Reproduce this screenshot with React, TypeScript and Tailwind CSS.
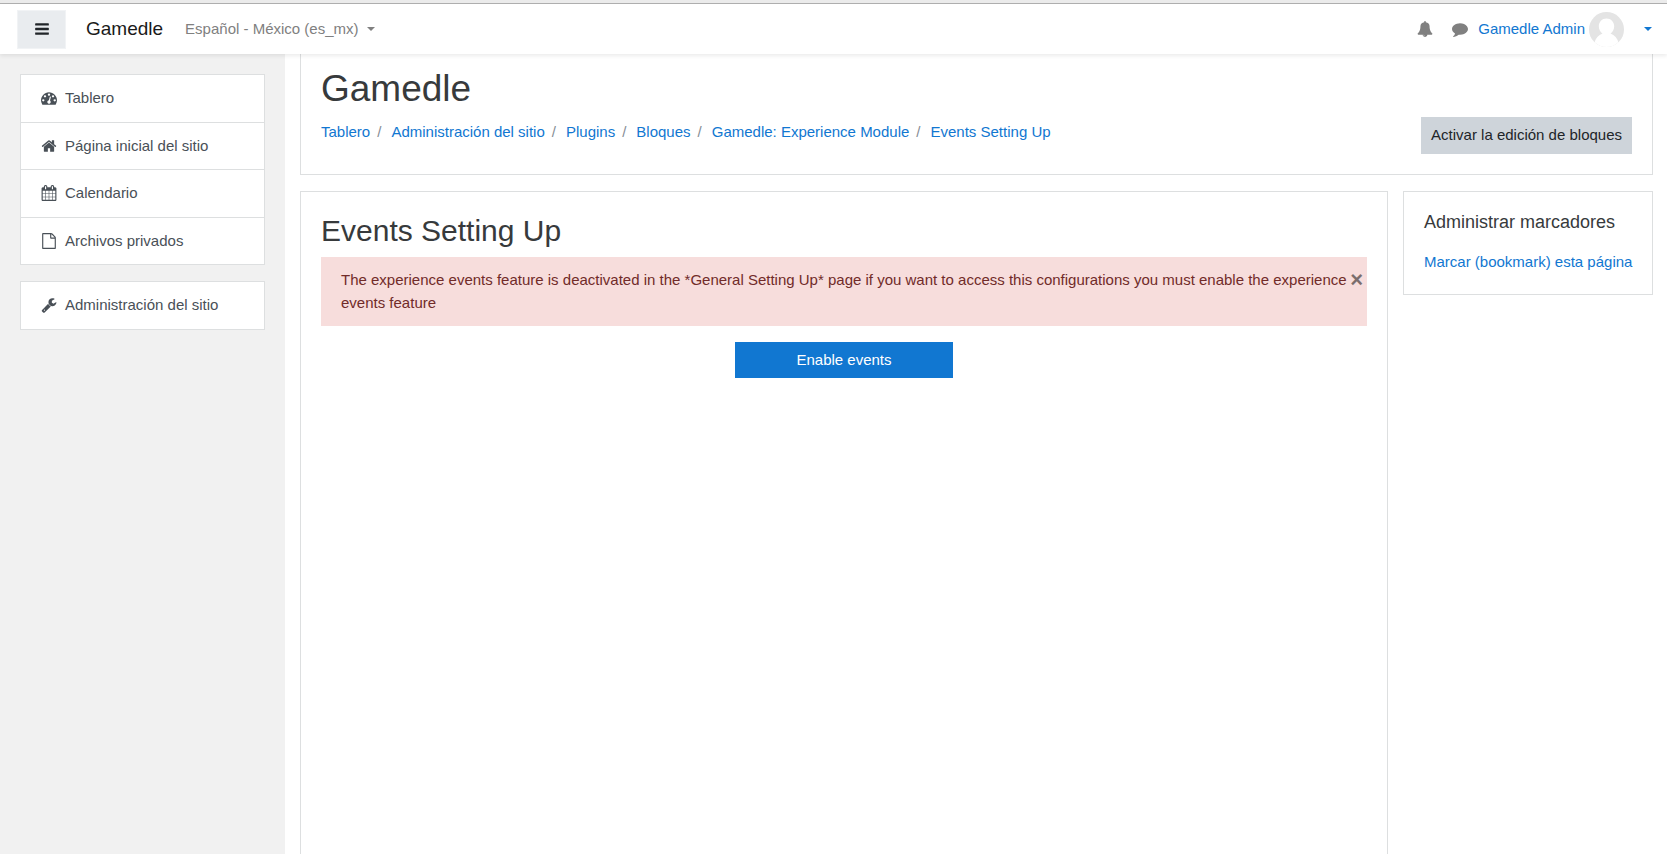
import React, { type ReactNode } from "react";

const icons = {
  bars: "M1664 1344v128q0 26-19 45t-45 19h-1408q-26 0-45-19t-19-45v-128q0-26 19-45t45-19h1408q26 0 45 19t19 45zm0-512v128q0 26-19 45t-45 19h-1408q-26 0-45-19t-19-45v-128q0-26 19-45t45-19h1408q26 0 45 19t19 45zm0-512v128q0 26-19 45t-45 19h-1408q-26 0-45-19t-19-45v-128q0-26 19-45t45-19h1408q26 0 45 19t19 45z",
  dashboard:
    "M384 1152q0-53-37.5-90.5t-90.5-37.5-90.5 37.5-37.5 90.5 37.5 90.5 90.5 37.5 90.5-37.5 37.5-90.5zm192-448q0-53-37.5-90.5t-90.5-37.5-90.5 37.5-37.5 90.5 37.5 90.5 90.5 37.5 90.5-37.5 37.5-90.5zm428 481l101-382q6-26-7.5-48.5t-38.5-29.5-48 6.5-30 39.5l-101 382q-60 5-107 43.5t-63 98.5q-20 77 20 146t117 89 146-20 89-117q16-60-6-117t-72-91zm660-33q0-53-37.5-90.5t-90.5-37.5-90.5 37.5-37.5 90.5 37.5 90.5 90.5 37.5 90.5-37.5 37.5-90.5zm-640-640q0-53-37.5-90.5t-90.5-37.5-90.5 37.5-37.5 90.5 37.5 90.5 90.5 37.5 90.5-37.5 37.5-90.5zm448 192q0-53-37.5-90.5t-90.5-37.5-90.5 37.5-37.5 90.5 37.5 90.5 90.5 37.5 90.5-37.5 37.5-90.5zm320 448q0 261-141 483-19 29-54 29h-1402q-35 0-54-29-141-221-141-483 0-182 71-348t191-286 286-191 348-71 348 71 286 191 191 286 71 348z",
  home: "M1472 992v480q0 26-19 45t-45 19h-384v-384h-256v384h-384q-26 0-45-19t-19-45v-480q0-1 .5-3t.5-3l575-474 575 474q1 2 1 6zm223-69l-62 74q-8 9-21 11h-3q-13 0-21-7l-692-577-692 577q-12 8-24 7-13-2-21-11l-62-74q-8-10-7-23.5t11-21.5l719-599q32-26 76-26t76 26l244 204v-195q0-14 9-23t23-9h192q14 0 23 9t9 23v408l219 182q10 8 11 21.5t-7 23.5z",
  calendar:
    "M192 1664h288v-288h-288v288zm352 0h320v-288h-320v288zm-352-352h288v-320h-288v320zm352 0h320v-320h-320v320zm-352-384h288v-288h-288v288zm736 736h320v-288h-320v288zm-384-736h320v-288h-320v288zm768 736h288v-288h-288v288zm-384-352h320v-320h-320v320zm-352-864v-288q0-13-9.5-22.5t-22.5-9.5h-64q-13 0-22.5 9.5t-9.5 22.5v288q0 13 9.5 22.5t22.5 9.5h64q13 0 22.5-9.5t9.5-22.5zm736 864h288v-320h-288v320zm-384-384h320v-288h-320v288zm384 0h288v-288h-288v288zm32-480v-288q0-13-9.5-22.5t-22.5-9.5h-64q-13 0-22.5 9.5t-9.5 22.5v288q0 13 9.5 22.5t22.5 9.5h64q13 0 22.5-9.5t9.5-22.5zm384-64v1280q0 52-38 90t-90 38h-1408q-52 0-90-38t-38-90v-1280q0-52 38-90t90-38h128v-96q0-66 47-113t113-47h64q66 0 113 47t47 113v96h384v-96q0-66 47-113t113-47h64q66 0 113 47t47 113v96h128q52 0 90 38t38 90z",
  file: "M1596 380q28 28 48 76t20 88v1152q0 40-28 68t-68 28h-1344q-40 0-68-28t-28-68v-1600q0-40 28-68t68-28h896q40 0 88 20t76 48zm-444-244v376h376q-10-29-22-41l-313-313q-12-12-41-22zm384 1528v-1024h-416q-40 0-68-28t-28-68v-416h-768v1536h1280z",
  wrench:
    "M448 1472q0-26-19-45t-45-19-45 19-19 45 19 45 45 19 45-19 19-45zm644-420l-682 682q-37 37-90 37-52 0-91-37l-106-108q-38-36-38-90 0-53 38-91l681-681q39 98 114.5 173.5t173.5 114.5zm634-435q0 39-23 106-47 134-164.5 217.5t-258.5 83.5q-185 0-316.5-131.5t-131.5-316.5 131.5-316.5 316.5-131.5q58 0 121.5 16.5t107.5 46.5q16 11 16 28t-16 28l-293 169v224l193 107q5-3 79-48.5t135.5-81 70.5-35.5q15 0 23.5 10t8.5 25z",
  bell: "M912 1696q0-16-16-16-59 0-101.5-42.5t-42.5-101.5q0-16-16-16t-16 16q0 73 51.5 124.5t124.5 51.5q16 0 16-16zm816-288q0 52-38 90t-90 38h-448q0 106-75 181t-181 75-181-75-75-181h-448q-52 0-90-38t-38-90q50-42 91-88t85-119.5 74.5-158.5 50-206 19.5-260q0-152 117-282.5t307-158.5q-8-19-8-39 0-40 28-68t68-28 68 28 28 68q0 20-8 39 190 28 307 158.5t117 282.5q0 139 19.5 260t50 206 74.5 158.5 85 119.5 91 88z",
  comment:
    "M1792 896q0 174-120 321.5t-326 233-450 85.5q-70 0-145-8-198 175-460 242-49 14-114 22-17 2-30.5-9t-17.5-29v-1q-3-4-.5-12t2-10 4.5-9.5l6-9 7-8.5 8-9q7-8 31-34.5t34.5-38 31-39.5 32.5-51 27-59 26-76q-157-89-247.5-220t-90.5-281q0-130 71-248.5t191-204.5 286-136.5 348-50.5q244 0 450 85.5t326 233 120 321.5z",
};

type IconName = keyof typeof icons;

function Icon({ name }: { name: IconName }) {
  return (
    <svg viewBox="0 0 1792 1792" className="size-4 shrink-0 fill-current" aria-hidden="true">
      <path d={icons[name]} />
    </svg>
  );
}

function Caret() {
  return (
    <svg viewBox="0 0 8 4" className="h-1 w-2 shrink-0 fill-current" aria-hidden="true">
      <path d="M0 0h8L4 4z" />
    </svg>
  );
}

function Avatar() {
  return (
    <svg viewBox="0 0 35 35" className="size-[35px] shrink-0" aria-hidden="true">
      <defs>
        <clipPath id="avatar-clip">
          <circle cx="17.5" cy="17.5" r="17.5" />
        </clipPath>
      </defs>
      <g clipPath="url(#avatar-clip)">
        <rect width="35" height="35" fill="#e4e4e4" />
        <path
          d="M17.5 6.500c4.500 0 7.700 3.400 7.700 7.800 0 3.200-1.500 5.700-3.700 7.200 4 1.500 7 4.700 8.200 9.500v4H5.300v-4c1.200-4.800 4.200-8 8.200-9.500-2.200-1.500-3.700-4-3.700-7.200 0-4.400 3.200-7.800 7.700-7.800z"
          fill="#fff"
        />
      </g>
    </svg>
  );
}

function NavList({ items }: { items: { icon: IconName; label: string }[] }) {
  return (
    <ul className="divide-y divide-[#dddfe0] border border-[#dddfe0] bg-white">
      {items.map(({ icon, label }) => (
        <li key={label}>
          <a href="#" className="flex items-center gap-2 px-5 py-3 text-[#495057]">
            <Icon name={icon} />
            {label}
          </a>
        </li>
      ))}
    </ul>
  );
}

function Link({ children }: { children: ReactNode }) {
  return (
    <a href="#" className="text-[#1177d1]">
      {children}
    </a>
  );
}

const crumbs = [
  "Tablero",
  "Administración del sitio",
  "Plugins",
  "Bloques",
  "Gamedle: Experience Module",
  "Events Setting Up",
];

export default function App() {
  return (
    <div className="flex min-h-screen flex-col bg-white font-['Liberation_Sans',Arial,sans-serif] text-[15px] leading-normal text-[#373a3c]">
      <div className="h-1 border-b border-[#b0b0b0] bg-[#ebebeb]" />

      <header className="z-10 flex h-[50px] items-center bg-white pr-[15px] pl-[17px] shadow-[0_2px_4px_rgba(0,0,0,0.08)]">
        <button
          type="button"
          aria-label="Menú"
          className="flex h-[39px] w-[49px] items-center justify-center border border-[#f1f3f5] bg-[#e9ecef] text-[#212529]"
        >
          <Icon name="bars" />
        </button>
        <a href="#" className="ml-5 text-[19px] text-[#1a1a1a]">
          Gamedle
        </a>
        <button type="button" className="ml-[22px] flex items-center gap-2 text-[#808080]">
          Español - México (es_mx)
          <Caret />
        </button>

        <div className="ml-auto flex items-center text-[#808080]">
          <button type="button" aria-label="Notificaciones">
            <Icon name="bell" />
          </button>
          <button type="button" aria-label="Mensajes" className="ml-[19px]">
            <Icon name="comment" />
          </button>
          <button type="button" className="ml-[10px] flex items-center text-[#1177d1]">
            Gamedle Admin
            <span className="mr-5 ml-1">
              <Avatar />
            </span>
            <Caret />
          </button>
        </div>
      </header>

      <div className="flex flex-1">
        <nav className="flex w-[285px] shrink-0 flex-col gap-4 bg-[#f1f1f1] p-5" aria-label="Navegación">
          <NavList
            items={[
              { icon: "dashboard", label: "Tablero" },
              { icon: "home", label: "Página inicial del sitio" },
              { icon: "calendar", label: "Calendario" },
              { icon: "file", label: "Archivos privados" },
            ]}
          />
          <NavList items={[{ icon: "wrench", label: "Administración del sitio" }]} />
        </nav>

        <div className="flex min-w-0 flex-1 flex-col gap-4 pr-[14px] pl-[15px]">
          <section className="border border-t-0 border-[#dddfe0] px-5 pt-[14px] pb-5">
            <h1 className="text-[37px] leading-[41px]">Gamedle</h1>
            <div className="mt-2 flex items-start justify-between">
              <nav aria-label="Ruta" className="pt-1">
                <ol className="flex flex-wrap">
                  {crumbs.map((crumb, i) => (
                    <li key={crumb}>
                      {i > 0 && <span className="pr-[10px] pl-[7px] text-[#868e96]">/</span>}
                      <Link>{crumb}</Link>
                    </li>
                  ))}
                </ol>
              </nav>
              <button type="button" className="h-[37px] bg-[#ced4da] px-[10px] text-[#212529]">
                Activar la edición de bloques
              </button>
            </div>
          </section>

          <div className="flex flex-1 items-stretch gap-[15px]">
            <main className="min-w-0 flex-1 border border-b-0 border-[#dddfe0] px-5 pt-[22px]">
              <h2 className="text-[30px] leading-[33px]">Events Setting Up</h2>
              <div role="alert" className="mt-[10px] flex items-start bg-[#f7dddc] py-3 pr-1 pl-5 text-[#712b29]">
                <p className="flex-1">
                  The experience events feature is deactivated in the *General Setting Up* page if you want to
                  access this configurations you must enable the experience events feature
                </p>
                <button
                  type="button"
                  aria-label="Cerrar"
                  className="text-[22px] leading-[22px] font-bold text-black opacity-50"
                >
                  ×
                </button>
              </div>
              <div className="mt-4 flex justify-center">
                <button type="button" className="h-9 w-[218px] bg-[#1177d1] text-white">
                  Enable events
                </button>
              </div>
            </main>

            <aside className="w-[250px] shrink-0 self-start border border-[#dddfe0] py-5 pr-3 pl-5">
              <h3 className="mb-[18px] text-[18px] leading-[21px]">Administrar marcadores</h3>
              <Link>Marcar (bookmark) esta página</Link>
            </aside>
          </div>
        </div>
      </div>
    </div>
  );
}
